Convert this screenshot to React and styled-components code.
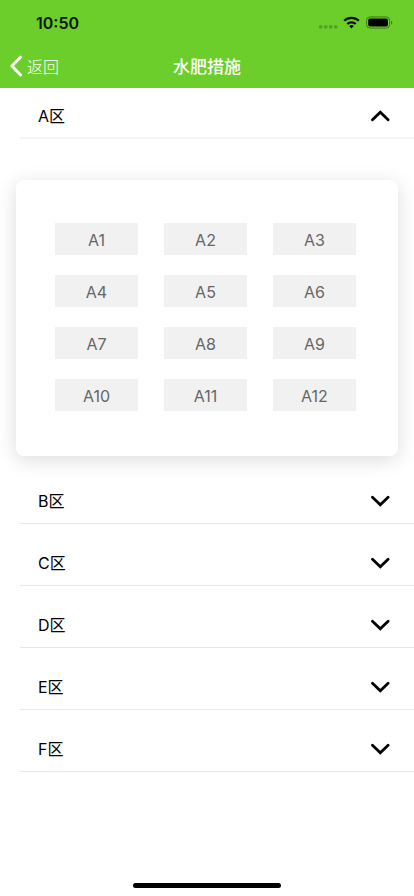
import React from 'react'
import styled, { createGlobalStyle } from 'styled-components'

const GlobalStyle = createGlobalStyle`
  * {
    box-sizing: border-box;
  }
  body {
    margin: 0;
    background: #fff;
    font-family: Inter, "Noto Sans CJK SC", sans-serif;
  }
  ul {
    margin: 0;
    padding: 0;
    list-style: none;
  }
`;

const Page = styled.div`
  display: flex;
  flex-direction: column;
  height: 896px;
  background: #fff;
  overflow: hidden;
`;

const Header = styled.header`
  height: 88px;
  background: #6bce2b;
`;

const StatusBar = styled.div`
  display: flex;
  justify-content: space-between;
  height: 44px;
  padding: 14px 21px 0 36px;
`;

const Time = styled.span`
  font-size: 16px;
  font-weight: 600;
  line-height: 19px;
  color: #0b1504;
`;

const NavBar = styled.div`
  display: grid;
  grid-template-columns: 1fr auto 1fr;
  align-items: center;
  height: 44px;
`;

const Back = styled.a`
  display: flex;
  align-items: center;
  gap: 5px;
  padding-left: 10px;
  font-size: 16px;
  line-height: 24px;
  color: #fff;
`;

const BackText = styled.span`
  padding-top: 1px;
  font-weight: 300;
`;

const Title = styled.h1`
  margin: 0;
  padding-top: 2px;
  font-size: 17px;
  font-weight: 500;
  line-height: 24px;
  color: #fff;
`;

const Row = styled.div`
  display: flex;
  align-items: center;
  justify-content: space-between;
  height: ${props => props.$first ? 51 : 62}px;
  margin-left: 20px;
  padding: ${props => props.$first ? 6 : 17}px 24px 0 18px;
  border-bottom: ${props => props.$first ? '2px solid #f4f4f4' : '1px solid #e8e8e8'};
`;

const Name = styled.span`
  font-size: 16px;
  line-height: 24px;
  color: #000;
`;

const Card = styled.ul`
  display: grid;
  grid-template-columns: repeat(3, 83px);
  grid-auto-rows: 32px;
  align-content: start;
  gap: 20px 26px;
  width: 382px;
  height: 276px;
  margin: 41px 0 6px 16px;
  padding: 43px 0 0 39px;
  border-radius: 8px;
  background: #fff;
  box-shadow: 0 4px 20px rgba(0, 0, 0, 0.14);
`;

const Cell = styled.li`
  background: #f1f1f1;
  font-size: 16px;
  line-height: 34px;
  text-align: center;
  color: #666;
`;

const HomeBar = styled.div`
  width: 148px;
  height: 5px;
  margin: auto auto 8px;
  border-radius: 3px;
  background: #000;
`;

function StatusIcons() {
  return (
    <svg width="75" height="18" viewBox="0 0 75 18">
      <g fill="#4fa01f">
        <rect x="1" y="11.2" width="3.4" height="3.4" rx="1" />
        <rect x="6" y="11.2" width="3.4" height="3.4" rx="1" />
        <rect x="11" y="11.2" width="3.4" height="3.4" rx="1" />
        <rect x="16" y="11.2" width="3.4" height="3.4" rx="1" />
      </g>
      <g fill="none" stroke="#081004" strokeWidth="2.3">
        <path d="M26.2 6.8a10.4 10.4 0 0 1 14.6 0" />
        <path d="M29.3 10a6 6 0 0 1 8.4 0" />
      </g>
      <path d="M31.2 12.1a3.3 3.3 0 0 1 4.6 0l-2.3 2.4z" fill="#081004" />
      <rect x="48.6" y="2.9" width="23" height="11.2" rx="3.4" fill="none" stroke="#3f7b19" />
      <rect x="50.2" y="4.5" width="19.8" height="8" rx="1.8" fill="#000" />
      <path d="M73 6.7a2 2 0 0 1 0 3.8z" fill="#3f7b19" />
    </svg>
  )
}

function BackIcon() {
  return (
    <svg width="12" height="22" viewBox="0 0 12 22">
      <path d="M10.4 2.2L1.9 11l8.5 8.8" fill="none" stroke="#fff" strokeWidth="3" strokeLinecap="round" strokeLinejoin="round" />
    </svg>
  )
}

function Arrow(props) {
  return (
    <svg width="20" height="12" viewBox="0 0 20 12">
      <path
        d={props.open ? 'M2.5 9.8L10.3 2.3l7.8 7.5' : 'M2.5 2.2l7.8 7.5 7.8-7.5'}
        fill="none"
        stroke="#000"
        strokeWidth="2.8"
        strokeLinecap="round"
      />
    </svg>
  )
}

function Area(props) {
  const area = props.data
  const cells = area.cells || []
  return (
    <section>
      <Row $first={props.first}>
        <Name>{area.name}</Name>
        <Arrow open={cells.length > 0} />
      </Row>
      {cells.length > 0 &&
        <Card>
          {cells.map((cell) => <Cell key={cell}>{cell}</Cell>)}
        </Card>
      }
    </section>
  )
}

const areas = [
  {
    id: 1,
    name: 'A区',
    cells: ['A1', 'A2', 'A3', 'A4', 'A5', 'A6', 'A7', 'A8', 'A9', 'A10', 'A11', 'A12']
  },
  { id: 2, name: 'B区' },
  { id: 3, name: 'C区' },
  { id: 4, name: 'D区' },
  { id: 5, name: 'E区' },
  { id: 6, name: 'F区' }
]

class App extends React.Component {
  render() {
    return (
      <Page>
        <GlobalStyle />
        <Header>
          <StatusBar>
            <Time>10:50</Time>
            <StatusIcons />
          </StatusBar>
          <NavBar>
            <Back>
              <BackIcon />
              <BackText>返回</BackText>
            </Back>
            <Title>水肥措施</Title>
          </NavBar>
        </Header>
        <main>
          {areas.map((data, index) =>
            <Area key={data.id} data={data} first={index === 0} />
          )}
        </main>
        <HomeBar />
      </Page>
    )
  }
}

export default App
